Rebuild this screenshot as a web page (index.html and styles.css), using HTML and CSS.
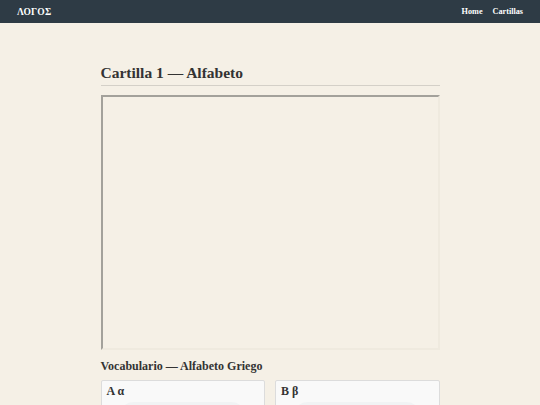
FILE: index.html
```html
<!DOCTYPE html>
<html lang="es">
<head>
<meta charset="utf-8">
<title>ΛΟΓΟΣ</title>
<link rel="stylesheet" href="styles.css">
</head>
<body>
<header class="nav">
  <a class="brand" href="#">ΛΟΓΟΣ</a>
  <nav class="links">
    <a href="#">Home</a>
    <a href="#">Cartillas</a>
  </nav>
</header>
<main class="page">
  <h1 class="title">Cartilla 1 — Alfabeto</h1>
  <div class="frame"></div>
  <h2 class="subtitle">Vocabulario — Alfabeto Griego</h2>
  <div class="cards">
    <div class="card">
      <div class="card-head">Α α</div>
      <div class="player"></div>
    </div>
    <div class="card">
      <div class="card-head">Β β</div>
      <div class="player"></div>
    </div>
  </div>
</main>
</body>
</html>
```
FILE: styles.css
```css
html, body {
  margin: 0;
  padding: 0;
}
body {
  background: #f5f0e6;
  font-family: "Liberation Serif", "DejaVu Serif", serif;
  color: #333;
  overflow: hidden;
  height: 405px;
}
.nav {
  height: 23px;
  background: #2e3b45;
  display: flex;
  align-items: center;
  justify-content: space-between;
  padding: 0 17px;
}
.brand {
  color: #fff;
  text-decoration: none;
  font-weight: bold;
  font-size: 9.5px;
  letter-spacing: 0.2px;
}
.links {
  display: flex;
  gap: 10px;
}
.links a {
  color: #fff;
  text-decoration: none;
  font-weight: bold;
  font-size: 8.2px;
}
.page {
  width: 339px;
  margin: 0 auto;
  padding-top: 40px;
}
.title {
  margin: 0;
  font-size: 15.5px;
  line-height: 19px;
  font-weight: bold;
  color: #333;
  padding-bottom: 3px;
  border-bottom: 1px solid #d4d0c8;
}
.frame {
  margin-top: 9px;
  height: 251px;
  border-style: solid;
  border-width: 2px;
  border-color: #a3a19b #efeadf #efeadf #a3a19b;
}
.subtitle {
  margin: 9px 0 0;
  font-size: 12px;
  line-height: 15px;
  font-weight: bold;
  color: #333;
}
.cards {
  margin-top: 6px;
  display: grid;
  grid-template-columns: 1fr 1fr;
  gap: 10px;
}
.card {
  background: #f9f9f9;
  border: 1px solid #dcdcdc;
  border-radius: 2px;
  padding: 3px 5px;
  height: 60px;
}
.card-head {
  font-size: 12px;
  line-height: 14px;
  font-weight: bold;
  color: #333;
}
.player {
  margin: 4px 15px 0 14px;
  height: 24px;
  border-radius: 12px;
  background: #f1f3f4;
}
```
